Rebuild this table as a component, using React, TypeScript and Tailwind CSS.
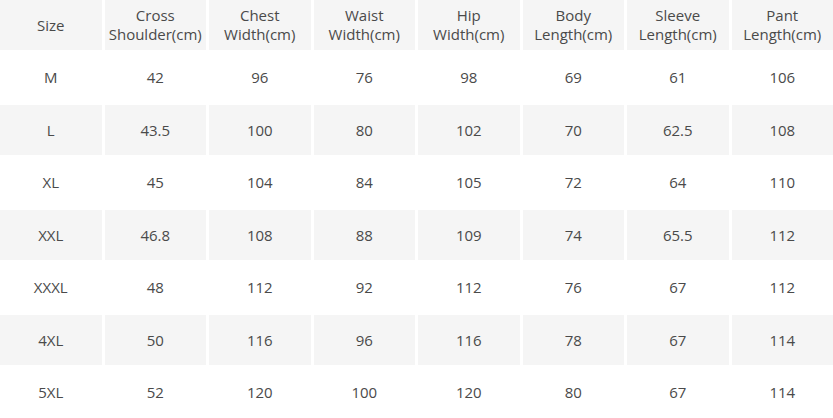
import React from "react";

const header = [
  ["Size"],
  ["Cross", "Shoulder(cm)"],
  ["Chest", "Width(cm)"],
  ["Waist", "Width(cm)"],
  ["Hip", "Width(cm)"],
  ["Body", "Length(cm)"],
  ["Sleeve", "Length(cm)"],
  ["Pant", "Length(cm)"],
];

const rows = [
  ["M", "42", "96", "76", "98", "69", "61", "106"],
  ["L", "43.5", "100", "80", "102", "70", "62.5", "108"],
  ["XL", "45", "104", "84", "105", "72", "64", "110"],
  ["XXL", "46.8", "108", "88", "109", "74", "65.5", "112"],
  ["XXXL", "48", "112", "92", "112", "76", "67", "112"],
  ["4XL", "50", "116", "96", "116", "78", "67", "114"],
  ["5XL", "52", "120", "100", "120", "80", "67", "114"],
];

export default function App() {
  return (
    <div
      className="w-[833px] h-[418px] bg-white overflow-hidden text-[#4a4a4a] text-[15px]"
      style={{ fontFamily: '"Open Sans", "Noto Sans", sans-serif' }}
    >
      <div className="grid grid-cols-8 gap-x-[3px] gap-y-[2.5px]">
        {header.map((h, i) => (
          <div
            key={"h" + i}
            className="h-[50px] bg-[#f5f5f5] flex flex-col items-center justify-center leading-[19px] text-center"
          >
            {h.map((line, j) => (
              <span key={j}>{line}</span>
            ))}
          </div>
        ))}
        {rows.map((r, ri) =>
          r.map((c, ci) => (
            <div
              key={ri + "-" + ci}
              className={
                "h-[50px] flex items-center justify-center " +
                (ri % 2 === 1 ? "bg-[#f5f5f5]" : "bg-white")
              }
            >
              {c}
            </div>
          ))
        )}
      </div>
    </div>
  );
}
